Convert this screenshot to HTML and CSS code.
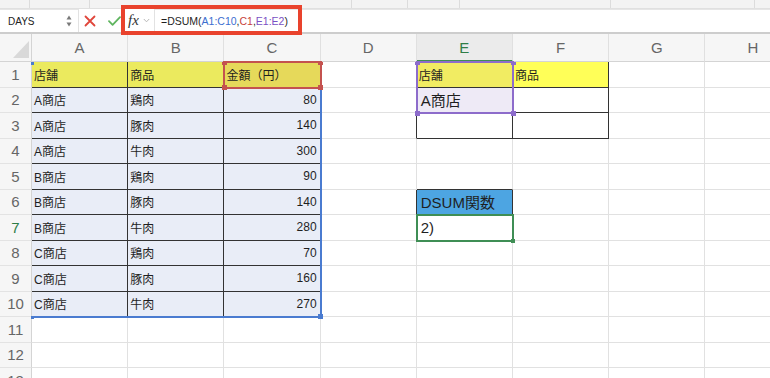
FILE: index.html
```html
<!DOCTYPE html>
<html lang="ja">
<head>
<meta charset="utf-8">
<link rel="stylesheet" href="styles.css">
</head>
<body>
<div class="app">
  <div class="toolbar">
    <span class="tb tb1"></span><span class="tb tb2"></span><span class="tb tb3"></span><span class="tb tb4"></span><span class="tb tb5"></span><span class="tb tb6"></span><span class="tb tb7"></span>
  </div>
  <div class="fbar">
    <div class="namebox">
      <span class="name">DAYS</span>
      <svg class="spin" width="6" height="12" viewBox="0 0 6 12"><path d="M3 0.5L5.5 4.5H0.5Z" fill="#7a7a7a"/><path d="M3 11.5L5.5 7.5H0.5Z" fill="#7a7a7a"/></svg>
    </div>
    <div class="actions">
      <svg width="12" height="12" viewBox="0 0 12 12"><path d="M1.5 1.5L10.5 10.5M10.5 1.5L1.5 10.5" stroke="#E0463B" stroke-width="1.8" stroke-linecap="round"/></svg>
      <svg width="13" height="10" viewBox="0 0 13 10"><path d="M1 5.2L4.6 8.8L12 1.2" stroke="#5FB55F" stroke-width="1.8" fill="none" stroke-linecap="round" stroke-linejoin="round"/></svg>
    </div>
    <div class="fx">
      <span class="fxt">fx</span>
      <svg width="7" height="5" viewBox="0 0 7 5"><path d="M0.8 1L3.5 3.8L6.2 1" stroke="#b8b8b8" stroke-width="1" fill="none"/></svg>
    </div>
    <div class="finput">=DSUM(<span class="rb">A1:C10</span>,<span class="rr">C1</span>,<span class="rp">E1:E2</span>)</div>
  </div>
  <div class="redbox"></div>

  <div class="sheet">
    <div class="corner"><span class="tri"></span></div>
    <div class="ch">A</div><div class="ch">B</div><div class="ch">C</div><div class="ch">D</div><div class="ch active">E</div><div class="ch">F</div><div class="ch">G</div><div class="ch">H</div>

    <div class="rh">1</div>
    <div class="c y1 bd">店舗</div><div class="c y1 bd">商品</div><div class="c y2 bd">金額（円）</div><div class="c brd"></div><div class="c y3 bd">店舗</div><div class="c y4 bd">商品</div><div class="c"></div><div class="c"></div>

    <div class="rh">2</div>
    <div class="c s bd">A商店</div><div class="c s bd">鶏肉</div><div class="c s bd num">80</div><div class="c brd"></div><div class="c e2 bd big">A商店</div><div class="c bd"></div><div class="c"></div><div class="c"></div>

    <div class="rh">3</div>
    <div class="c s bd">A商店</div><div class="c s bd">豚肉</div><div class="c s bd num">140</div><div class="c brd"></div><div class="c bd"></div><div class="c bd"></div><div class="c"></div><div class="c"></div>

    <div class="rh">4</div>
    <div class="c s bd">A商店</div><div class="c s bd">牛肉</div><div class="c s bd num">300</div><div class="c"></div><div class="c"></div><div class="c"></div><div class="c"></div><div class="c"></div>

    <div class="rh">5</div>
    <div class="c s bd">B商店</div><div class="c s bd">鶏肉</div><div class="c s bd num">90</div><div class="c"></div><div class="c bbd"></div><div class="c"></div><div class="c"></div><div class="c"></div>

    <div class="rh">6</div>
    <div class="c s bd">B商店</div><div class="c s bd">豚肉</div><div class="c s bd num">140</div><div class="c brd"></div><div class="c blue bd big">DSUM関数</div><div class="c"></div><div class="c"></div><div class="c"></div>

    <div class="rh active">7</div>
    <div class="c s bd">B商店</div><div class="c s bd">牛肉</div><div class="c s bd num">280</div><div class="c"></div><div class="c big">2)</div><div class="c"></div><div class="c"></div><div class="c"></div>

    <div class="rh">8</div>
    <div class="c s bd">C商店</div><div class="c s bd">鶏肉</div><div class="c s bd num">70</div><div class="c"></div><div class="c"></div><div class="c"></div><div class="c"></div><div class="c"></div>

    <div class="rh">9</div>
    <div class="c s bd">C商店</div><div class="c s bd">豚肉</div><div class="c s bd num">160</div><div class="c"></div><div class="c"></div><div class="c"></div><div class="c"></div><div class="c"></div>

    <div class="rh">10</div>
    <div class="c s bd">C商店</div><div class="c s bd">牛肉</div><div class="c s bd num">270</div><div class="c"></div><div class="c"></div><div class="c"></div><div class="c"></div><div class="c"></div>

    <div class="rh">11</div>
    <div class="c"></div><div class="c"></div><div class="c"></div><div class="c"></div><div class="c"></div><div class="c"></div><div class="c"></div><div class="c"></div>

    <div class="rh">12</div>
    <div class="c"></div><div class="c"></div><div class="c"></div><div class="c"></div><div class="c"></div><div class="c"></div><div class="c"></div><div class="c"></div>

    <div class="rh">13</div>
    <div class="c"></div><div class="c"></div><div class="c"></div><div class="c"></div><div class="c"></div><div class="c"></div><div class="c"></div><div class="c"></div>

    <div class="ov ov-blue"></div>
    <div class="hd hb-tl"></div><div class="hd hb-bl"></div><div class="hd hb-br"></div>
    <div class="ov ov-red"></div>
    <div class="hd hr-tl"></div><div class="hd hr-tr"></div><div class="hd hr-bl"></div><div class="hd hr-br"></div>
    <div class="ov ov-purple"></div>
    <div class="hd hp-tl"></div><div class="hd hp-tr"></div><div class="hd hp-bl"></div><div class="hd hp-br"></div>
    <div class="ov ov-green"></div>
    <div class="hd hg-br"></div>
  </div>
</div>
</body>
</html>
```

FILE: styles.css
```css
html, body {
  margin: 0;
  padding: 0;
  background: #ffffff;
}

.app {
  position: relative;
  width: 770px;
  height: 378px;
  overflow: hidden;
  font-family: "Liberation Sans", "Noto Sans CJK JP", sans-serif;
  color: #1f1f1f;
}

/* top toolbar strip */
.toolbar {
  display: flex;
  height: 8px;
  background: #f3f3f3;
  border-bottom: 1px solid #e0e0e0;
}
.tb { height: 8px; border-right: 1px solid #dcdcdc; }
.tb1 { width: 29px; }
.tb2 { width: 59px; }
.tb3 { width: 261px; }
.tb4 { width: 55px; }
.tb5 { width: 51px; }
.tb6 { width: 150px; }
.tb7 { width: 143px; }

/* formula bar */
.fbar {
  display: flex;
  align-items: stretch;
  height: 23px;
  border-bottom: 2px solid #cdcdcd;
  background: #ffffff;
}
.namebox {
  width: 79px;
  display: flex;
  align-items: center;
  border-right: 1px solid #e2e2e2;
  border-top: 1px solid #e6e6e6;
  box-sizing: border-box;
  padding-left: 8px;
}
.name {
  font-size: 10px;
  color: #222;
  width: 58px;
}
.spin { display: block; }
.actions {
  width: 42px;
  display: flex;
  align-items: center;
  gap: 12px;
  padding-left: 5px;
  box-sizing: border-box;
}
.fx {
  width: 33px;
  display: flex;
  align-items: center;
  gap: 4px;
  padding-left: 7px;
  box-sizing: border-box;
}
.fxt {
  font-family: "Liberation Serif", "DejaVu Serif", serif;
  font-style: italic;
  font-size: 15px;
  color: #333;
  line-height: 1;
}
.finput {
  flex: 1;
  display: flex;
  align-items: center;
  padding-left: 6px;
  border-left: 1px solid #e2e2e2;
  border-top: 1px solid #e6e6e6;
  font-size: 10.5px;
  color: #1f1f1f;
  white-space: nowrap;
}
.rb { color: #3b6ed0; }
.rr { color: #c8413a; }
.rp { color: #7a50c4; }

.redbox {
  position: absolute;
  left: 121px;
  top: 5px;
  width: 181px;
  height: 30px;
  box-sizing: border-box;
  border: 4px solid #e9432d;
  z-index: 5;
}

/* sheet grid */
.sheet {
  position: relative;
  display: grid;
  grid-template-columns: 32px repeat(8, 96.2px);
  grid-template-rows: 28px repeat(13, 25.5px);
}
.corner {
  background: #f6f6f6;
  border-right: 1px solid #d4d4d4;
  border-bottom: 1px solid #d4d4d4;
  display: flex;
  align-items: flex-end;
  justify-content: flex-end;
  padding: 0 2px 3px 0;
}
.tri {
  width: 16px;
  height: 17px;
  background: #d9d9d9;
  clip-path: polygon(100% 0, 100% 100%, 0 100%);
}
.ch {
  background: #f6f6f6;
  border-right: 1px solid #e0e0e0;
  border-bottom: 1px solid #d4d4d4;
  display: flex;
  align-items: center;
  justify-content: center;
  font-size: 15px;
  color: #666;
}
.ch.active {
  background: #ebebeb;
  color: #2f7d47;
  border-bottom: 2px solid #3f8e55;
}
.rh {
  background: #f6f6f6;
  border-right: 1px solid #d4d4d4;
  border-bottom: 1px solid #e3e3e3;
  display: flex;
  align-items: center;
  justify-content: center;
  font-size: 15px;
  color: #666;
}
.rh.active { color: #2f7d47; }

.c {
  border-right: 1px solid #e1e1e1;
  border-bottom: 1px solid #e1e1e1;
  display: flex;
  align-items: center;
  padding: 0 3px 0 2px;
  font-size: 12px;
  color: #1f1f1f;
  white-space: nowrap;
  overflow: hidden;
  min-width: 0;
}
.num { justify-content: flex-end; }
.big { font-size: 15px; padding-left: 4px; }
.bd { border-right-color: #333; border-bottom-color: #333; }
.brd { border-right-color: #333; }
.bbd { border-bottom-color: #333; }

.y1 { background: #ebea5e; }
.y2 { background: #e6d95a; }
.y3 { background: #f1ec62; }
.y4 { background: #ffff58; }
.s { background: #e9edf7; }
.e2 { background: #eeeaf6; }
.blue { background: #4da5e2; }

/* range overlays */
.ov {
  position: absolute;
  box-sizing: border-box;
  pointer-events: none;
}
.ov-blue {
  left: 31px; top: 27px; width: 290.6px; height: 257px;
  border-right: 2px solid #4a7bd0;
  border-bottom: 2px solid #4a7bd0;
}
.ov-red {
  left: 223.4px; top: 27px; width: 98.2px; height: 27.5px;
  border: 2px solid #c4524f;
}
.ov-purple {
  left: 415.8px; top: 27px; width: 98.2px; height: 53px;
  border: 2px solid #8d6ccb;
}
.ov-green {
  left: 415.8px; top: 180px; width: 98.2px; height: 27.5px;
  border: 2px solid #3f8e55;
}
.hd { position: absolute; width: 5px; height: 5px; }
.hb-tl { background: #4a7bd0; left: 31px; top: 28px; width: 3px; height: 3px; }
.hb-bl { background: #4a7bd0; left: 31px; top: 282px; width: 3px; height: 3px; }
.hb-br { background: #4a7bd0; left: 318px; top: 280px; }
.hr-tl { background: #c4524f; left: 222px; top: 28px; height: 3px; }
.hr-tr { background: #c4524f; left: 318px; top: 28px; height: 3px; }
.hr-bl { background: #c4524f; left: 222px; top: 51px; }
.hr-br { background: #c4524f; left: 318px; top: 51px; }
.hp-tl { background: #8d6ccb; left: 414.5px; top: 28px; height: 3px; }
.hp-tr { background: #8d6ccb; left: 510.5px; top: 28px; height: 3px; }
.hp-bl { background: #8d6ccb; left: 414.5px; top: 77px; }
.hp-br { background: #8d6ccb; left: 510.5px; top: 77px; }
.hg-br { background: #3f8e55; left: 510.5px; top: 204.5px; width: 4px; height: 4px; }
```
